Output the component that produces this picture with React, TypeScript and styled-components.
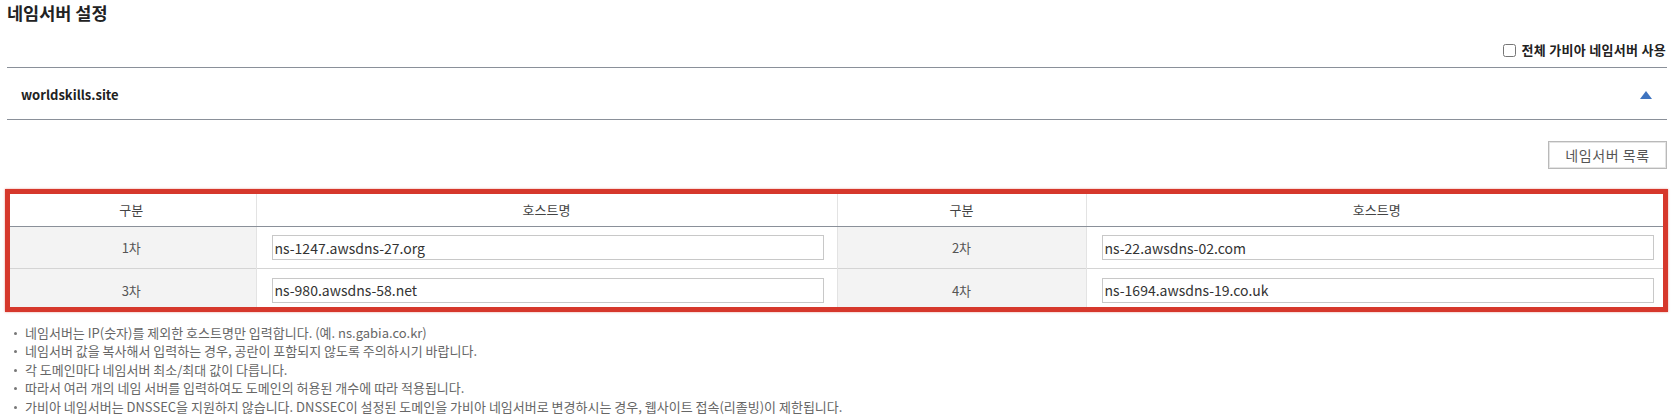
import { createGlobalStyle } from 'styled-components';
import styled from 'styled-components';

const GlobalStyle = createGlobalStyle`
    body {
        margin: 0;
        background: #fff;
        font-family: "Noto Sans CJK KR", "Noto Sans", sans-serif;
        color: #333;
    }
`;

const servers: { label: string, host: string }[][] = [
    [{ label: '1차', host: 'ns-1247.awsdns-27.org' }, { label: '2차', host: 'ns-22.awsdns-02.com' }],
    [{ label: '3차', host: 'ns-980.awsdns-58.net' }, { label: '4차', host: 'ns-1694.awsdns-19.co.uk' }],
];

const notes: string[] = [
    '네임서버는 IP(숫자)를 제외한 호스트명만 입력합니다. (예. ns.gabia.co.kr)',
    '네임서버 값을 복사해서 입력하는 경우, 공란이 포함되지 않도록 주의하시기 바랍니다.',
    '각 도메인마다 네임서버 최소/최대 값이 다릅니다.',
    '따라서 여러 개의 네임 서버를 입력하여도 도메인의 허용된 개수에 따라 적용됩니다.',
    '가비아 네임서버는 DNSSEC을 지원하지 않습니다. DNSSEC이 설정된 도메인을 가비아 네임서버로 변경하시는 경우, 웹사이트 접속(리졸빙)이 제한됩니다.',
];

export default function App(): JSX.Element {
    return (
        <>
            <GlobalStyle />
            <Page>
                <Title>네임서버 설정</Title>
                <OptionRow>
                    <CheckLabel>
                        <CheckBox type="checkbox" />
                        전체 가비아 네임서버 사용
                    </CheckLabel>
                </OptionRow>
                <DomainHeader>
                    <DomainName>worldskills.site</DomainName>
                    <Arrow />
                </DomainHeader>
                <ButtonRow>
                    <ListButton>네임서버 목록</ListButton>
                </ButtonRow>
                <TableWrap>
                    <Table>
                        <colgroup>
                            <col style={{ width: '15%' }} />
                            <col style={{ width: '35%' }} />
                            <col style={{ width: '15%' }} />
                            <col style={{ width: '35%' }} />
                        </colgroup>
                        <thead>
                            <tr>
                                <Th>구분</Th>
                                <Th>호스트명</Th>
                                <Th>구분</Th>
                                <Th>호스트명</Th>
                            </tr>
                        </thead>
                        <tbody>
                            {servers.map((row, i) => (
                                <BodyRow key={i} $last={i === servers.length - 1}>
                                    {row.map((s) => [
                                        <LabelCell key={s.label}>{s.label}</LabelCell>,
                                        <InputCell key={s.host}>
                                            <HostInput defaultValue={s.host} />
                                        </InputCell>,
                                    ])}
                                </BodyRow>
                            ))}
                        </tbody>
                    </Table>
                    <Highlight />
                </TableWrap>
                <NoteList>
                    {notes.map((n) => (
                        <Note key={n}>{n}</Note>
                    ))}
                </NoteList>
            </Page>
        </>
    );
}

const Page = styled.div`
    padding: 0 8px 0 7px;
`;

const Title = styled.h2`
    margin: 0;
    padding-top: 2px;
    font-size: 17.5px;
    font-weight: 700;
    line-height: 22px;
    color: #222;
`;

const OptionRow = styled.div`
    display: flex;
    justify-content: flex-end;
    margin-top: 15px;
    height: 28px;
    border-bottom: 1px solid #8a9099;
`;

const CheckLabel = styled.label`
    display: flex;
    align-items: center;
    gap: 5px;
    height: 20px;
    font-size: 13px;
    font-weight: 700;
    letter-spacing: 0.3px;
    color: #222;
    margin-right: 1px;
`;

const CheckBox = styled.input`
    width: 13px;
    height: 13px;
    margin: 2px 0 0 0;
`;

const DomainHeader = styled.div`
    display: flex;
    align-items: center;
    justify-content: space-between;
    height: 51px;
    padding: 0 15px 0 14px;
    border-bottom: 1px solid #8a9099;
`;

const DomainName = styled.span`
    font-size: 13px;
    font-weight: 700;
    color: #222;
    margin-top: 2px;
`;

const Arrow = styled.span`
    width: 0;
    height: 0;
    border-left: 6px solid transparent;
    border-right: 6px solid transparent;
    border-bottom: 8px solid #3f74c0;
    margin-top: 2px;
`;

const ButtonRow = styled.div`
    display: flex;
    justify-content: flex-end;
    margin-top: 21px;
`;

const ListButton = styled.button`
    width: 119px;
    height: 28px;
    background: #fff;
    border: 1px solid #b9b9b9;
    box-shadow: inset 0 0 0 1px #e4e4e4;
    font-family: inherit;
    font-size: 14px;
    letter-spacing: 0.6px;
    color: #555;
    padding: 0;
`;

const TableWrap = styled.div`
    position: relative;
    margin-top: 20px;
`;

const Table = styled.table`
    width: 100%;
    table-layout: fixed;
    border-collapse: collapse;
`;

const Th = styled.th`
    height: 33px;
    padding: 4px 0 0 0;
    font-size: 13px;
    font-weight: 400;
    color: #444;
    background: #fff;
    border-bottom: 1px solid #8a9099;
    border-left: 1px solid #e3e3e3;

    &:first-child {
        border-left: none;
    }
`;

const BodyRow = styled.tr<{ $last: boolean }>`
    height: ${(p) => (p.$last ? 43 : 42)}px;
    border-bottom: ${(p) => (p.$last ? 'none' : '1px solid #d4d4d4')};
`;

const LabelCell = styled.td`
    background: #f3f3f3;
    text-align: center;
    font-size: 13px;
    color: #555;
    border-left: 1px solid #e3e3e3;
    padding: 0;

    &:first-child {
        border-left: none;
    }
`;

const InputCell = styled.td`
    background: #fff;
    padding: 0 13px 0 15px;
    border-left: 1px solid #e3e3e3;
`;

const HostInput = styled.input`
    display: block;
    box-sizing: border-box;
    width: 100%;
    height: 25px;
    border: 1px solid #c8c8c8;
    padding: 0 2px;
    font-family: inherit;
    font-size: 14px;
    color: #333;
    outline: none;
`;

const Highlight = styled.div`
    position: absolute;
    top: 0;
    bottom: 0;
    left: -2px;
    right: -1px;
    border: 5px solid #d6382c;
    box-shadow: 0 0 2px rgba(214, 56, 44, 0.5);
    pointer-events: none;
`;

const NoteList = styled.ul`
    list-style: none;
    margin: 0;
    padding: 12px 0 0 0;
`;

const Note = styled.li`
    position: relative;
    padding-left: 18px;
    font-size: 13px;
    line-height: 18.5px;
    color: #666;

    &::before {
        content: '';
        position: absolute;
        left: 7px;
        top: 8px;
        width: 3px;
        height: 3px;
        border-radius: 50%;
        background: #777;
    }
`;
